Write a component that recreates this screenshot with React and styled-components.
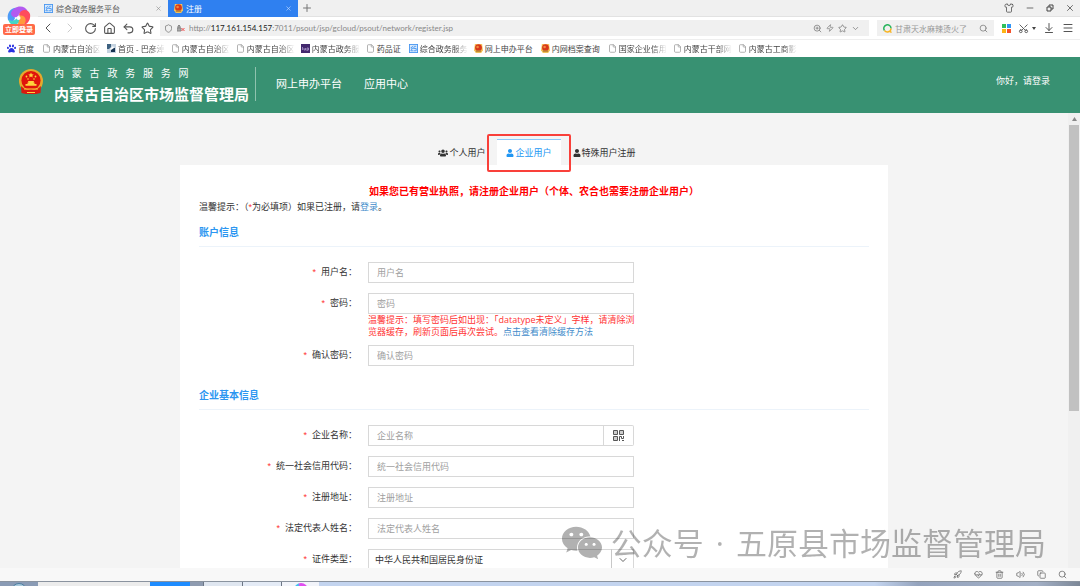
import styled, { createGlobalStyle } from 'styled-components';
import {
  ArrowDownToLine, ChevronDown, ChevronLeft, ChevronRight, Copy, File, HeartPulse, House,
  Menu, Minus, Plus, Rocket, RotateCw, Scissors, Search, Shield, Shirt, Star,
  Trash2, Undo2, Volume2, X, Zap, ZoomIn,
} from 'lucide-react';
import { FaPaw, FaUser, FaUsers, FaWeixin } from 'react-icons/fa';

const bookmarks = [
  { icon: 'baidu', text: '百度' },
  { icon: 'doc', text: '内蒙古自治区', fade: true },
  { icon: 'site', text: '首页 - 巴彦淖', fade: true },
  { icon: 'doc', text: '内蒙古自治区', fade: true },
  { icon: 'doc', text: '内蒙古自治区', fade: true },
  { icon: 'purple', text: '内蒙古政务服', fade: true },
  { icon: 'doc', text: '药品证' },
  { icon: 'blue', text: '综合政务服务', fade: true },
  { icon: 'emblem', text: '网上申办平台' },
  { icon: 'emblem', text: '内网档案查询' },
  { icon: 'doc', text: '国家企业信用', fade: true },
  { icon: 'doc', text: '内蒙古干部网', fade: true },
  { icon: 'doc', text: '内蒙古工商影', fade: true },
];

const BlueMark = () => (
  <svg width="9" height="9" viewBox="0 0 10 10" fill="none" stroke="#4a97f0">
    <rect x="0.5" y="0.5" width="9" height="9" fill="#dcebfc" />
    <path d="M4.5 2 2 4.5h2L2 7.5h2.5M8 2.5H6L5 5h3v2.5H5" />
  </svg>
);

const EmblemMark = () => (
  <svg width="9" height="9" viewBox="0 0 10 10">
    <path d="M1 0h8l1 7-2 3H2L0 7z" fill="#f7c65c" />
    <circle cx="5" cy="4.2" r="3.8" fill="#d8371b" />
    <path d="M2 7h6v2H2z" fill="#c08a3a" />
    <circle cx="4" cy="3.4" r="1.4" fill="#f28b3a" />
  </svg>
);

const BookmarkIcon = ({ kind }) => {
  if (kind === 'baidu') return <FaPaw size={9} color="#2932e1" />;
  if (kind === 'blue') return <BlueMark />;
  if (kind === 'emblem') return <EmblemMark />;
  if (kind === 'purple') {
    return (
      <svg width="9" height="9" viewBox="0 0 9 9">
        <path d="M0 0h9v9H0z" fill="#43286e" />
        <path d="M1.5 3v3M3 4v2h1.5V4M6 4v3M6 4h1.5v2H6" stroke="#b9a8d8" strokeWidth="0.7" fill="none" />
      </svg>
    );
  }
  if (kind === 'site') {
    return (
      <svg width="9" height="9" viewBox="0 0 9 9">
        <path d="M0 0h9v9H0z" fill="#c5d3e0" />
        <path d="M0 0h4v3L2 5H0z" fill="#3d6180" />
        <path d="M4 4h4v4H4z" fill="#173453" />
        <path d="m3 5 3-3 1 2-3 2z" fill="#fff" />
      </svg>
    );
  }
  return <File size={9} color="#999" strokeWidth={2} />;
};

const Pinwheel = () => (
  <svg width="26" height="22" viewBox="0 0 26 22">
    <path d="M2 15C0 6 8 0 14 4c-5 1-7 5-5 9-1 4-4 5-7 2z" fill="#4d9bf7" />
    <path d="M5 8C8 0 19-1 22 7c-5-2-9 0-10 5-5 1-7-1-7-4z" fill="#b35af0" />
    <path d="M13 10c1-6 9-7 11-1 1 5-2 10-6 11 1-4-1-7-5-10z" fill="#ff4b5c" />
    <path d="M13 11c5-2 8 3 6 7-3 3-7 2-8-1z" fill="#ff9a3c" />
    <path d="M3 14c2 3 6 2 9-2 2 3 1 7-3 8-4 0-7-3-6-6z" fill="#45d6c6" />
    <circle cx="12.5" cy="13" r="2" fill="#fff" />
  </svg>
);

const NationalEmblem = () => (
  <svg width="26" height="26" viewBox="0 0 26 26">
    <circle cx="13" cy="12" r="12" fill="#e6a92c" />
    <circle cx="13" cy="11.5" r="9.6" fill="#e0140c" />
    <path d="M3 17c3 3 6 4 10 4s7-1 10-4l-.5 7-4.500 1h-10l-4.500-1z" fill="#d9190f" />
    <path d="m13 3.500.8 1.700 1.900.2-1.400 1.300.4 1.800-1.700-.9-1.700.9.4-1.800-1.400-1.300 1.900-.2z" fill="#ffd23c" />
    <g fill="#ffd23c">
      <circle cx="8.5" cy="7.5" r="0.9" />
      <circle cx="17.5" cy="7.5" r="0.9" />
      <circle cx="10" cy="10" r="0.8" />
      <circle cx="16" cy="10" r="0.8" />
      <path d="M10 12h6l-.5 1.500h1V15h2v1.800h-11V15h2v-1.500h1z" />
      <path d="M6 19.500h14v1H6zM9 23h8v1H9z" />
    </g>
  </svg>
);

const ScanCode = () => (
  <svg width="11" height="11" viewBox="0 0 11 11" fill="none" stroke="#555">
    <path d="M.5.5h4v4h-4zM6.5.5h4v4h-4zM.5 6.500h4v4h-4z" fill="#ccc" />
    <path d="M6.500 11V6.500h2v2h2V6M9 10.500h2" />
  </svg>
);

const FormRow = ({ id, label, help, children }) => (
  <Row $tight={Boolean(help)}>
    <Label htmlFor={id}><Required>*</Required>{label}：</Label>
    <Field>
      {children || <TextInput id={id} placeholder={label} />}
      {help}
    </Field>
  </Row>
);

const Browser = () => (
  <BrowserTop>
    <Profile>
      <Pinwheel />
      <LoginBadge type="button">立即登录</LoginBadge>
    </Profile>
    <TabStrip>
      <BrowserTab><BlueMark /><TabTitle>综合政务服务平台</TabTitle><X size={7} color="#888" /></BrowserTab>
      <BrowserTab $active><EmblemMark /><TabTitle>注册</TabTitle><X size={7} color="#cfe2ff" /></BrowserTab>
      <NewTab type="button" aria-label="新标签页"><Plus size={12} strokeWidth={2} /></NewTab>
      <WindowButtons>
        <IconButton type="button" aria-label="皮肤"><Shirt size={10} /></IconButton>
        <IconButton type="button" aria-label="最小化"><Minus size={10} /></IconButton>
        <IconButton type="button" aria-label="还原">
          <svg width="8" height="8" viewBox="0 0 8 8" fill="none" stroke="#444">
            <path d="M1 3h4v4H1zM3 3V1h4v4H5" />
          </svg>
        </IconButton>
        <IconButton type="button" aria-label="关闭"><X size={10} /></IconButton>
      </WindowButtons>
    </TabStrip>
    <Toolbar>
      <NavButtons>
        <IconButton type="button" aria-label="后退"><ChevronLeft size={16} strokeWidth={1.5} /></IconButton>
        <IconButton type="button" aria-label="前进" $faint><ChevronRight size={16} strokeWidth={1.5} /></IconButton>
        <IconButton type="button" aria-label="刷新"><RotateCw size={13} /></IconButton>
        <IconButton type="button" aria-label="主页"><House size={13} /></IconButton>
        <IconButton type="button" aria-label="恢复"><Undo2 size={13} /></IconButton>
        <IconButton type="button" aria-label="收藏"><Star size={13} /></IconButton>
      </NavButtons>
      <AddressBar>
        <Shield size={9} />
        <svg width="8" height="8" viewBox="0 0 8 8" fill="none">
          <path d="M0 4h4v3H0zM1 4V2l1-1 1 1v2" stroke="#888" fill="#aaa" />
          <path d="m4.500 4 3 3m0-3-3 3" stroke="#f05050" />
        </svg>
        <Url>http://<b>117.161.154.157</b>:7011/psout/jsp/gcloud/psout/network/register.jsp</Url>
        <ZoomIn size={9} /><Zap size={8} /><Star size={9} /><ChevronDown size={9} />
      </AddressBar>
      <SearchBox>
        <svg width="9" height="9" viewBox="0 0 9 9" fill="none" strokeWidth="1.5">
          <path d="M1.500 6.500A3.600 3.600 0 1 1 8 4.500" stroke="#27b45c" />
          <path d="M8 4.500A3.600 3.600 0 0 1 1.500 6.500M6.500 7l2 1.500" stroke="#f8b423" />
        </svg>
        <SearchInput aria-label="搜索" placeholder="甘肃天水麻辣烫火了" />
        <Search size={9} />
      </SearchBox>
      <Tools>
        <svg width="9" height="9" viewBox="0 0 9 9">
          <path d="M0 0h4v4H0z" fill="#2fbf5b" /><path d="M5 0h4v4H5z" fill="#2f95f5" />
          <path d="M0 5h4v4H0z" fill="#fdb515" /><path d="M5 5h4v4H5z" fill="#f4512c" />
        </svg>
        <ScissorsTool>
          <UprightScissors size={11} />
          <svg width="4" height="3" viewBox="0 0 4 3"><path d="M0 0h4L2 3z" fill="#444" /></svg>
        </ScissorsTool>
        <ArrowDownToLine size={12} />
        <Menu size={12} />
      </Tools>
    </Toolbar>
  </BrowserTop>
);

const App = () => {
  return (
    <Screen>
      <GlobalStyle />
      <Browser />
      <Bookmarks>
        {bookmarks.map((mark, i) => (
          <Bookmark key={i} href="#">
            <BookmarkIcon kind={mark.icon} />
            <BookmarkText $fade={mark.fade}>{mark.text}</BookmarkText>
          </Bookmark>
        ))}
      </Bookmarks>

      <SiteHeader>
        <NationalEmblem />
        <Brand>
          <BrandSub>内   蒙   古   政   务   服   务   网</BrandSub>
          <BrandName>内蒙古自治区市场监督管理局</BrandName>
        </Brand>
        <SiteNav>
          <NavLink href="#">网上申办平台</NavLink>
          <NavLink href="#">应用中心</NavLink>
        </SiteNav>
        <Greeting href="#">你好，请登录</Greeting>
      </SiteHeader>

      <Viewport>
        <Content>
          <UserTabs>
            <UserTab type="button"><FaUsers size={10} />个人用户</UserTab>
            <UserTab type="button" $active><FaUser size={8} />企业用户<Highlight /></UserTab>
            <UserTab type="button"><FaUser size={8} />特殊用户注册</UserTab>
          </UserTabs>
          <Panel>
            <Notice>如果您已有营业执照，请注册企业用户（个体、农合也需要注册企业用户）</Notice>
            <Hint>温馨提示：（<Asterisk>*</Asterisk>为必填项）如果已注册，请<Link href="#">登录</Link>。</Hint>
            <Sections>
              <section>
                <SectionTitle>账户信息</SectionTitle>
                <FormRow id="user" label="用户名" />
                <FormRow
                  id="password"
                  label="密码"
                  help={(
                    <Help>
                      温馨提示：填写密码后如出现：「datatype未定义」字样，请清除浏<br />
                      览器缓存，刷新页面后再次尝试。<Link href="#">点击查看清除缓存方法</Link>
                    </Help>
                  )}
                />
                <FormRow id="confirm" label="确认密码" />
              </section>
              <section>
                <SectionTitle>企业基本信息</SectionTitle>
                <FormRow id="company" label="企业名称">
                  <InputGroup>
                    <TextInput id="company" placeholder="企业名称" />
                    <ScanButton type="button" aria-label="扫码"><ScanCode /></ScanButton>
                  </InputGroup>
                </FormRow>
                <FormRow id="credit" label="统一社会信用代码" />
                <FormRow id="address" label="注册地址" />
                <FormRow id="legal" label="法定代表人姓名" />
                <FormRow id="idtype" label="证件类型">
                  <SelectBox>
                    <Select id="idtype"><option>中华人民共和国居民身份证</option></Select>
                    <SelectArrow><ChevronDown size={12} strokeWidth={1.5} /></SelectArrow>
                  </SelectBox>
                </FormRow>
              </section>
            </Sections>
          </Panel>
        </Content>
        <Scrollbar>
          <svg width="5" height="4" viewBox="0 0 5 4"><path d="M0 4h5L2.500 0z" fill="#888" /></svg>
          <Thumb />
        </Scrollbar>
        <Watermark>
          <FaWeixin size={42} />
          <span>公众号<Dot>·</Dot>五原县市场监督管理局</span>
        </Watermark>
      </Viewport>

      <StatusBar>
        <Rocket size={9} /><HeartPulse size={9} /><Trash2 size={9} /><Volume2 size={9} /><Copy size={9} /><Search size={9} />
      </StatusBar>
      <Taskbar>
        <Task $width={38} $color="#8a9bb5"><StartOrb /></Task>
        <Task $width={112} $color="#ececec" />
        <Task $width={40} $color="#1e8cff" />
        <Task $width={13} $color="#8e9bb0" />
        <Task $width={39} $color="#dfe6f0" $edge />
        <Task $width={39} $color="#e4ebf6" $edge />
        <Task $width={38} $color="#f2f4fa" $edge><TaskDot /></Task>
      </Taskbar>
    </Screen>
  );
};

export default App;

const GlobalStyle = createGlobalStyle`
  * {
    box-sizing: border-box;
  }
  body {
    margin: 0;
    font-family: "Open Sans", "Noto Sans CJK SC", sans-serif;
    font-size: 9px;
    color: #333;
  }
  button, input, select {
    font: inherit;
    color: inherit;
    margin: 0;
  }
  a {
    text-decoration: none;
  }
  svg {
    flex-shrink: 0;
  }
`;

const Screen = styled.div`
  display: flex;
  flex-direction: column;
  height: 100vh;
  overflow: hidden;
  background: #fff;
`;

const BrowserTop = styled.div`
  display: grid;
  grid-template-columns: 38px 1fr;
  grid-template-rows: 17px 22px;
  flex-shrink: 0;
  border-bottom: 1px solid #eee;
`;

const Profile = styled.div`
  grid-row: 1 / 3;
  display: flex;
  flex-direction: column;
  align-items: center;
  padding-top: 5px;
  background: linear-gradient(#f0f0f0 17px, #fff 17px);
`;

const LoginBadge = styled.button`
  width: 32px;
  height: 11px;
  margin-top: -3px;
  padding: 0;
  border: 0;
  border-radius: 2px;
  background: #ff6a48;
  color: #fff;
  font-size: 7px;
  font-weight: 700;
  line-height: 11px;
  white-space: nowrap;
`;

const TabStrip = styled.div`
  display: flex;
  align-items: center;
  background: #f0f0f0;
  border-bottom: 1px solid #e2e2e2;
`;

const BrowserTab = styled.div`
  display: flex;
  align-items: center;
  gap: 3px;
  width: 130px;
  height: 17px;
  padding: 0 6px;
  font-size: 8px;
  color: ${props => (props.$active ? '#fff' : '#555')};
  background: ${props => (props.$active ? '#2f80f0' : 'transparent')};
`;

const TabTitle = styled.span`
  flex: 1;
`;

const IconButton = styled.button`
  display: flex;
  align-items: center;
  padding: 0;
  border: 0;
  background: none;
  color: ${props => (props.$faint ? '#ccc' : '#555')};
`;

const NewTab = styled(IconButton)`
  margin-left: 3px;
  color: #777;
`;

const WindowButtons = styled.div`
  display: flex;
  gap: 11px;
  margin-left: auto;
  padding-right: 5px;
`;

const Toolbar = styled.div`
  display: flex;
  align-items: center;
  min-width: 0;
`;

const NavButtons = styled.div`
  display: flex;
  align-items: center;
  gap: 6px;
  padding: 0 6px 0 2px;
`;

const AddressBar = styled.div`
  display: flex;
  flex: 1;
  align-items: center;
  gap: 4px;
  min-width: 0;
  height: 16px;
  padding: 0 9px 0 4px;
  background: #f0f0f0;
  color: #777;
`;

const Url = styled.span`
  flex: 1;
  overflow: hidden;
  white-space: nowrap;
  font-family: Lato, sans-serif;
  font-size: 8px;
  color: #888;

  b {
    font-weight: 400;
    color: #222;
  }
`;

const SearchBox = styled.div`
  display: flex;
  align-items: center;
  gap: 3px;
  width: 117px;
  height: 16px;
  margin-left: 8px;
  padding: 0 6px;
  background: #f0f0f0;
  color: #777;
`;

const SearchInput = styled.input`
  flex: 1;
  min-width: 0;
  padding: 0;
  border: 0;
  background: none;
  font-size: 8px;

  &::placeholder {
    color: #999;
  }
`;

const Tools = styled.div`
  display: flex;
  align-items: center;
  gap: 7px;
  padding: 0 6px 0 8px;
  color: #555;
`;

const ScissorsTool = styled.span`
  display: flex;
  align-items: center;
  gap: 3px;
`;

const UprightScissors = styled(Scissors)`
  transform: rotate(-90deg);
`;

const Bookmarks = styled.nav`
  display: flex;
  align-items: center;
  gap: 8px;
  flex-shrink: 0;
  height: 17px;
  padding: 0 7px;
`;

const Bookmark = styled.a`
  display: flex;
  align-items: center;
  gap: 2px;
  color: #444;
  font-size: 8px;
`;

const BookmarkText = styled.span`
  margin-right: ${props => (props.$fade ? '-2px' : '0')};
  white-space: nowrap;
  mask-image: ${props => (props.$fade ? 'linear-gradient(to right, #000 70%, transparent)' : 'none')};
`;

const SiteHeader = styled.header`
  display: flex;
  align-items: flex-start;
  flex-shrink: 0;
  height: 56px;
  padding: 10px 30px 0 18px;
  background: #389172;
  color: #fff;

  > svg {
    margin-top: 2px;
  }
`;

const Brand = styled.div`
  height: 34px;
  margin-left: 10px;
  padding-right: 6px;
  border-right: 1px solid #8fc2ae;
`;

const BrandSub = styled.div`
  font-size: 10px;
  line-height: 12px;
  white-space: pre;
`;

const BrandName = styled.div`
  margin-top: 5px;
  font-size: 15px;
  font-weight: 700;
  line-height: 20px;
`;

const SiteNav = styled.nav`
  display: flex;
  gap: 22px;
  margin-left: 20px;
  line-height: 34px;
`;

const NavLink = styled.a`
  color: #fff;
  font-size: 11px;
`;

const Greeting = styled.a`
  margin-left: auto;
  color: #fff;
  font-size: 9px;
  line-height: 28px;
`;

const Viewport = styled.div`
  position: relative;
  display: flex;
  flex: 1;
  min-height: 0;
  overflow: hidden;
  background: #f4f4f4;
`;

const Content = styled.main`
  flex: 1;
  padding-top: 26px;
`;

const UserTabs = styled.div`
  display: flex;
  justify-content: center;
  gap: 12px;
  height: 26px;
  padding-left: 6px;
`;

const UserTab = styled.button`
  position: relative;
  display: flex;
  align-items: center;
  justify-content: center;
  gap: 1px;
  padding: ${props => (props.$active ? '0 9px' : '0')};
  border: 0;
  border-top: 1px solid ${props => (props.$active ? '#8cc8f8' : 'transparent')};
  background: ${props => (props.$active ? '#fff' : 'none')};
  color: ${props => (props.$active ? '#2196f3' : '#333')};
  line-height: 14px;
`;

const Highlight = styled.span`
  position: absolute;
  inset: -6px -10px -7px;
  border: 2px solid #f9403a;
  border-radius: 2px;
`;

const Panel = styled.div`
  max-width: 708px;
  margin: 0 auto;
  padding: 18px 19px 0;
  background: #fff;
`;

const Notice = styled.h1`
  margin: 0;
  color: #f00;
  font-size: 10px;
  font-weight: 700;
  line-height: 16px;
  text-align: center;
`;

const Hint = styled.p`
  margin: 0 0 8px;
  line-height: 16px;
`;

const Link = styled.a`
  color: #428bca;
`;

const Sections = styled.div`
  display: flex;
  flex-direction: column;
  gap: 10px;
`;

const SectionTitle = styled.h2`
  margin: 0 0 15px;
  padding-bottom: 5px;
  border-bottom: 1px solid #ecf3fa;
  color: #2b96f1;
  font-size: 10px;
  font-weight: 700;
  line-height: 18px;
`;

const Row = styled.div`
  display: grid;
  grid-template-columns: 158px 266px;
  column-gap: 11px;
  margin-bottom: ${props => (props.$tight ? '7px' : '10px')};
`;

const Label = styled.label`
  text-align: right;
  line-height: 19px;
`;

const Asterisk = styled.span`
  color: #f33;
  font-family: "Liberation Sans", sans-serif;
`;

const Required = styled(Asterisk)`
  margin-right: 5px;
`;

const Field = styled.div`
  min-width: 0;
`;

const TextInput = styled.input`
  display: block;
  width: 100%;
  height: 21px;
  padding: 0 8px;
  border: 1px solid #d8d8d8;
  background: #fff;

  &::placeholder {
    color: #a0a0a0;
  }
`;

const Help = styled.div`
  color: #f33;
  line-height: 12px;
  white-space: nowrap;
`;

const InputGroup = styled.div`
  display: flex;
`;

const ScanButton = styled.button`
  display: flex;
  align-items: center;
  justify-content: center;
  flex: 0 0 30px;
  padding: 0;
  border: 1px solid #d8d8d8;
  border-left: 0;
  border-radius: 0 2px 2px 0;
  background: #fff;
`;

const SelectBox = styled.div`
  position: relative;
`;

const Select = styled.select`
  display: block;
  width: 100%;
  height: 21px;
  padding: 0 6px;
  border: 1px solid #d8d8d8;
  border-radius: 0;
  background: #fff;
  appearance: none;
`;

const SelectArrow = styled.span`
  position: absolute;
  top: 0;
  right: 0;
  display: flex;
  align-items: center;
  justify-content: center;
  width: 23px;
  height: 21px;
  border-left: 1px solid #c8c8c8;
  pointer-events: none;
`;

const Scrollbar = styled.div`
  display: flex;
  flex-direction: column;
  align-items: center;
  gap: 4px;
  width: 12px;
  padding: 4px 1px;
  background: #f0f0f0;
`;

const Thumb = styled.div`
  width: 100%;
  height: 64%;
  background: #c1c1c1;
`;

const Watermark = styled.div`
  position: absolute;
  right: 34px;
  bottom: 4px;
  display: flex;
  align-items: center;
  gap: 8px;
  color: #000;
  font-size: 31px;
  line-height: 42px;
  opacity: 0.3;
  white-space: nowrap;
  pointer-events: none;
`;

const Dot = styled.span`
  margin: 0 12px;
`;

const StatusBar = styled.footer`
  display: flex;
  align-items: center;
  justify-content: flex-end;
  gap: 12px;
  flex-shrink: 0;
  height: 13px;
  padding-right: 13px;
  background: #f8f8f8;
  color: #666;
`;

const Taskbar = styled.div`
  display: flex;
  flex-shrink: 0;
  height: 5px;
  overflow: hidden;
  border-top: 1px solid #8a939f;
  background: linear-gradient(to right, #c3d4ef 70%, #c3d4ef 81%, #94a3bd 85%, #a3b0c6 96%, #7c8797);
`;

const Task = styled.div`
  display: flex;
  justify-content: center;
  width: ${props => props.$width}px;
  background: ${props => props.$color};
  border-left: ${props => (props.$edge ? '1px solid #6c7685' : '0')};
`;

const StartOrb = styled.span`
  width: 16px;
  height: 16px;
  margin-top: 1px;
  border: 1px solid #4d7ea0;
  border-radius: 50%;
  background: #a9c9dc;
`;

const TaskDot = styled.span`
  width: 14px;
  height: 14px;
  margin-top: 1px;
  border-radius: 50%;
  background: linear-gradient(to right, #3fc4f0 30%, #e04df0 40%);
`;
